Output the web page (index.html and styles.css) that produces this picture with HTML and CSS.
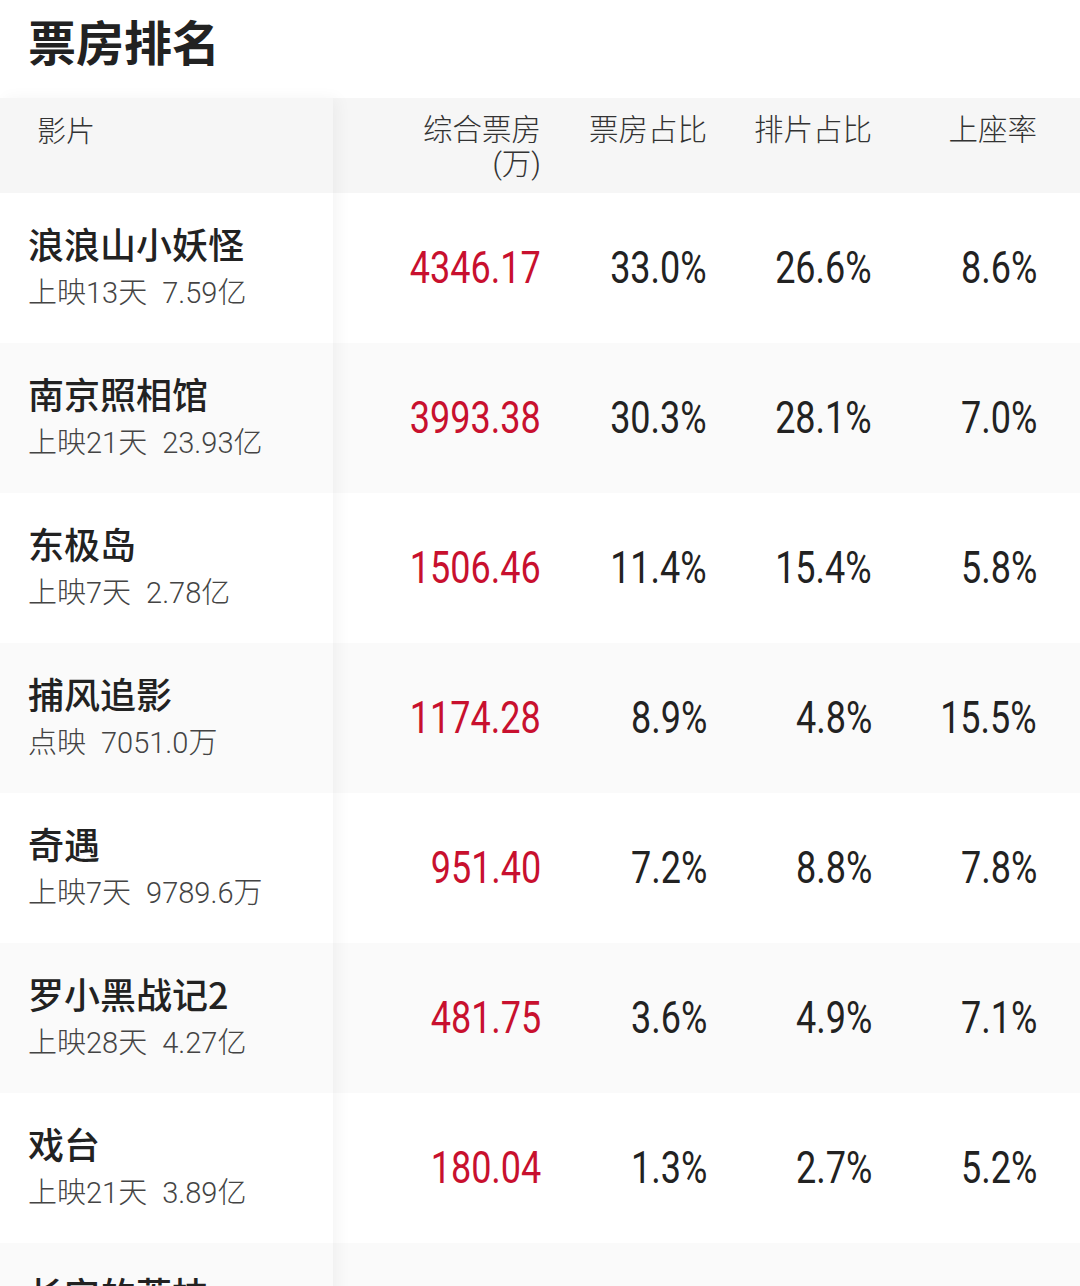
FILE: index.html
```html
<!DOCTYPE html>
<html lang="zh-CN">
<head>
<meta charset="utf-8">
<title>票房排名</title>
<link rel="stylesheet" href="styles.css">
</head>
<body>
<h1 class="title">票房排名</h1>
<div class="table">
  <div class="fixed">
    <div class="cell head-cell"><span class="head-label">影片</span></div>
    <div class="cell name-cell"><div class="name">浪浪山小妖怪</div><div class="sub">上映13天<span class="gross">7.59亿</span></div></div>
    <div class="cell name-cell alt"><div class="name">南京照相馆</div><div class="sub">上映21天<span class="gross">23.93亿</span></div></div>
    <div class="cell name-cell"><div class="name">东极岛</div><div class="sub">上映7天<span class="gross">2.78亿</span></div></div>
    <div class="cell name-cell alt"><div class="name">捕风追影</div><div class="sub">点映<span class="gross">7051.0万</span></div></div>
    <div class="cell name-cell"><div class="name">奇遇</div><div class="sub">上映7天<span class="gross">9789.6万</span></div></div>
    <div class="cell name-cell alt"><div class="name">罗小黑战记2</div><div class="sub">上映28天<span class="gross">4.27亿</span></div></div>
    <div class="cell name-cell"><div class="name">戏台</div><div class="sub">上映21天<span class="gross">3.89亿</span></div></div>
    <div class="cell name-cell alt"><div class="name">长安的荔枝</div><div class="sub">上映35天<span class="gross">6.12亿</span></div></div>
  </div>
  <div class="scroll">
    <div class="row head-row">
      <div class="hcol">综合票房<br>(万)</div>
      <div class="hcol">票房占比</div>
      <div class="hcol">排片占比</div>
      <div class="hcol">上座率</div>
    </div>
    <div class="row">
      <div class="num red"><span>4346.17</span></div><div class="num"><span>33.0%</span></div><div class="num"><span>26.6%</span></div><div class="num"><span>8.6%</span></div>
    </div>
    <div class="row alt">
      <div class="num red"><span>3993.38</span></div><div class="num"><span>30.3%</span></div><div class="num"><span>28.1%</span></div><div class="num"><span>7.0%</span></div>
    </div>
    <div class="row">
      <div class="num red"><span>1506.46</span></div><div class="num"><span>11.4%</span></div><div class="num"><span>15.4%</span></div><div class="num"><span>5.8%</span></div>
    </div>
    <div class="row alt">
      <div class="num red"><span>1174.28</span></div><div class="num"><span>8.9%</span></div><div class="num"><span>4.8%</span></div><div class="num"><span>15.5%</span></div>
    </div>
    <div class="row">
      <div class="num red"><span>951.40</span></div><div class="num"><span>7.2%</span></div><div class="num"><span>8.8%</span></div><div class="num"><span>7.8%</span></div>
    </div>
    <div class="row alt">
      <div class="num red"><span>481.75</span></div><div class="num"><span>3.6%</span></div><div class="num"><span>4.9%</span></div><div class="num"><span>7.1%</span></div>
    </div>
    <div class="row">
      <div class="num red"><span>180.04</span></div><div class="num"><span>1.3%</span></div><div class="num"><span>2.7%</span></div><div class="num"><span>5.2%</span></div>
    </div>
    <div class="row alt">
      <div class="num red"><span>162.33</span></div><div class="num"><span>1.2%</span></div><div class="num"><span>2.1%</span></div><div class="num"><span>6.0%</span></div>
    </div>
  </div>
</div>
</body>
</html>
```
FILE: styles.css
```css
html, body {
  margin: 0;
  padding: 0;
  background: #ffffff;
}
body {
  font-family: "Noto Sans CJK SC", "Noto Sans", sans-serif;
  color: #222222;
  width: 1080px;
  height: 1286px;
  overflow: hidden;
}
.title {
  margin: 0;
  height: 98px;
  box-sizing: border-box;
  padding: 13px 0 0 28px;
  font-size: 48px;
  line-height: 54px;
  font-weight: 700;
  color: #222222;
}
.table {
  display: flex;
}
.fixed {
  width: 333px;
  flex: none;
  position: relative;
  z-index: 1;
  box-shadow: 5px 0 14px rgba(0, 0, 0, 0.045);
}
.cell {
  background: #ffffff;
  box-sizing: border-box;
}
.cell.alt {
  background: #fafafa;
}
.head-cell {
  height: 95px;
  background: #f6f6f6;
  padding: 15px 0 0 37px;
}
.head-label {
  font-size: 29px;
  line-height: 32px;
  color: #333333;
  font-weight: 300;
}
.name-cell {
  height: 150px;
  padding: 27px 0 0 28px;
}
.name {
  font-size: 36px;
  line-height: 46px;
  font-weight: 500;
  color: #222222;
}
.sub {
  margin-top: 7px;
  font-family: "Roboto", "Noto Sans CJK SC", sans-serif;
  font-size: 29px;
  line-height: 40px;
  color: #444444;
  font-weight: 300;
}
.gross {
  margin-left: 15px;
}
.scroll {
  flex: 1;
  overflow: hidden;
}
.row {
  display: grid;
  grid-template-columns: 208px 166px 165px 165px 1fr;
  height: 150px;
  align-items: center;
  background: #ffffff;
}
.row.alt {
  background: #fafafa;
}
.head-row {
  height: 95px;
  align-items: start;
  background: #f6f6f6;
  padding-top: 15px;
  box-sizing: border-box;
}
.hcol {
  text-align: right;
  font-family: "Roboto", "Noto Sans CJK SC", sans-serif;
  font-size: 29.5px;
  line-height: 34px;
  color: #333333;
  font-weight: 300;
}
.num {
  text-align: right;
  font-family: "Roboto", sans-serif;
  font-size: 45px;
  line-height: 52px;
  color: #222222;
}
.num span {
  display: inline-block;
  transform: scaleX(0.8);
  transform-origin: right center;
}
.num.red {
  color: #c8102e;
}
```
